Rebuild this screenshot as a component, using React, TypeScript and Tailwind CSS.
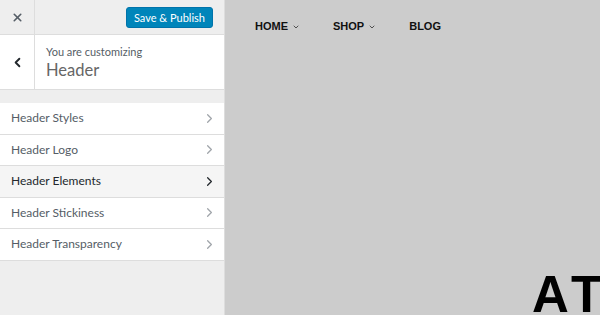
import { FiChevronRight, FiChevronLeft, FiX, FiChevronDown } from "react-icons/fi";

const sections = [
  { label: "Header Styles", active: false },
  { label: "Header Logo", active: false },
  { label: "Header Elements", active: true },
  { label: "Header Stickiness", active: false },
  { label: "Header Transparency", active: false },
];

const App = () => {
  return (
    <div className="flex h-[315px] w-[600px] overflow-hidden font-['Lato',sans-serif]">
      {/* Customizer sidebar */}
      <aside className="flex w-[225px] shrink-0 flex-col border-r border-[#dddddd] bg-[#eeeeee]">
        <div className="flex h-[35px] items-stretch border-b border-[#dddddd]">
          <button className="flex w-[35px] items-center justify-center border-r border-[#dddddd] text-[#555d66]">
            <FiX className="text-[13px]" strokeWidth={3} />
          </button>
          <div className="flex flex-1 items-center justify-end pr-[11px]">
            <button className="h-[21px] w-[87px] rounded-[3px] border border-[#0073aa] bg-[#0085ba] text-center text-[11px] leading-none text-white">
              Save &amp; Publish
            </button>
          </div>
        </div>

        <div className="flex h-[55px] items-stretch border-b border-[#dddddd] bg-white">
          <button className="flex w-[35px] items-center justify-center border-r border-[#dddddd] text-[#23282d]">
            <FiChevronLeft className="text-[15px]" strokeWidth={3} />
          </button>
          <div className="flex flex-col justify-center pl-[11px] pt-[1px] text-[#555d66]">
            <span className="text-[11px] leading-[15px]">You are customizing</span>
            <span className="text-[16.5px] leading-[23px] text-[#666666]">Header</span>
          </div>
        </div>

        <ul className="mt-[12px] border-t border-[#eeeeee]">
          {sections.map((s) => (
            <li
              key={s.label}
              className={`flex h-[31.5px] items-center justify-between border-b border-[#dddddd] pl-[11px] pr-[7px] text-[12px] ${
                s.active ? "bg-[#f5f5f5] text-[#23282d]" : "bg-white text-[#555d66]"
              }`}
            >
              <span>{s.label}</span>
              <FiChevronRight
                className={`text-[15px] ${s.active ? "text-[#23282d]" : "text-[#a0a5aa]"}`}
                strokeWidth={2}
              />
            </li>
          ))}
        </ul>
      </aside>

      {/* Site preview */}
      <main className="flex flex-1 flex-col overflow-hidden bg-[#cccccc]">
        <nav className="flex h-[53px] shrink-0 items-center pl-[30px] font-['Liberation_Sans',sans-serif] text-[11px] font-bold text-[#111111]">
          <span className="flex items-center gap-[4px]">
            HOME <FiChevronDown className="text-[8px]" />
          </span>
          <span className="ml-[33px] flex items-center gap-[4px]">
            SHOP <FiChevronDown className="text-[8px]" />
          </span>
          <span className="ml-[33px]">BLOG</span>
        </nav>
        <div className="mt-[217px] whitespace-nowrap pl-[307px]">
          <span className="font-['Liberation_Sans',sans-serif] text-[51px] font-bold leading-[50px] tracking-[6px] text-black">
            AT
          </span>
        </div>
      </main>
    </div>
  );
};

export default App;
